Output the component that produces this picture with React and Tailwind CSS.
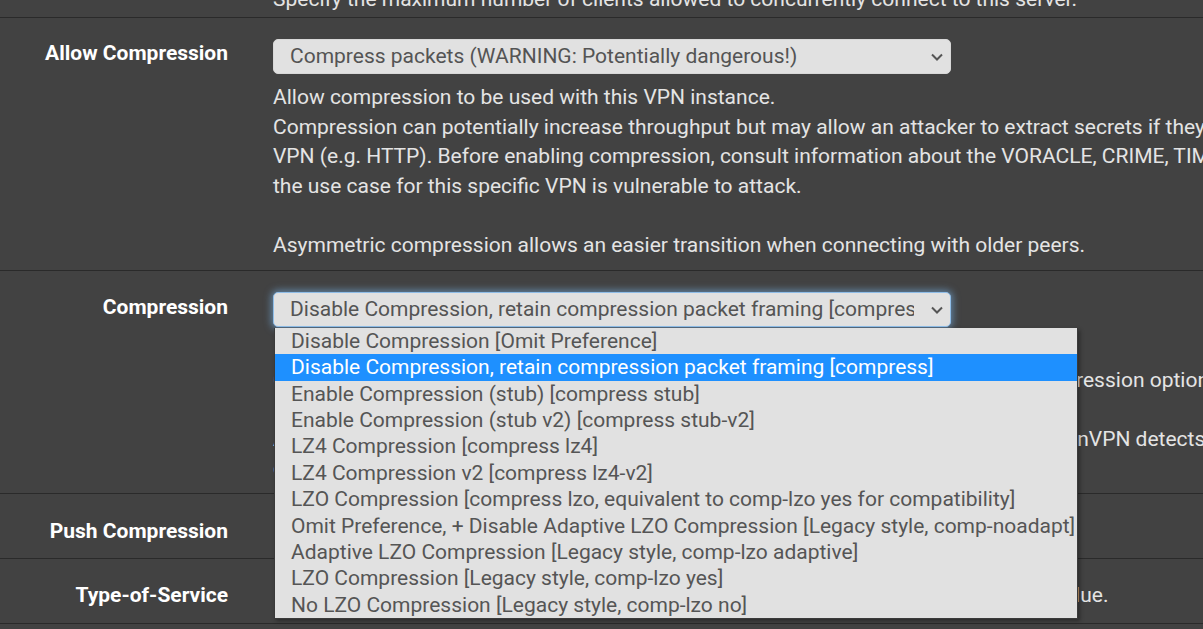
import React from "react";

const options = [
  "Disable Compression [Omit Preference]",
  "Disable Compression, retain compression packet framing [compress]",
  "Enable Compression (stub) [compress stub]",
  "Enable Compression (stub v2) [compress stub-v2]",
  "LZ4 Compression [compress lz4]",
  "LZ4 Compression v2 [compress lz4-v2]",
  "LZO Compression [compress lzo, equivalent to comp-lzo yes for compatibility]",
  "Omit Preference, + Disable Adaptive LZO Compression [Legacy style, comp-noadapt]",
  "Adaptive LZO Compression [Legacy style, comp-lzo adaptive]",
  "LZO Compression [Legacy style, comp-lzo yes]",
  "No LZO Compression [Legacy style, comp-lzo no]",
];

function Chevron() {
  return (
    <svg width="12" height="8" viewBox="0 0 12 8" className="shrink-0">
      <polyline points="1,1.5 6,6.5 11,1.5" fill="none" stroke="#555" strokeWidth="2" />
    </svg>
  );
}

function Select({ text, focused }) {
  return (
    <div
      className={
        "w-[678px] h-[35px] rounded-[5px] bg-[#e1e1e1] text-[#545454] flex items-center pl-[16px] pr-[7px] border " +
        (focused
          ? "border-[#8fbde8] shadow-[0_0_7px_2px_rgba(120,180,235,0.55)]"
          : "border-[#d8d8d8]")
      }
    >
      <div className="flex-1 overflow-hidden whitespace-nowrap mr-[17px]">{text}</div>
      <Chevron />
    </div>
  );
}

function Label({ children, pt = "pt-[21px]" }) {
  return (
    <div className={"w-[228px] shrink-0 text-right font-bold text-white " + pt}>{children}</div>
  );
}

function Line({ children }) {
  return <div className="whitespace-nowrap h-[29.5px]">{children}</div>;
}

function Checkbox() {
  return <span className="inline-block w-[19px] h-[19px] ml-[4px] rounded-[3px] bg-white border border-[#888] mr-[7px] align-[-3px]" />;
}

export default function App() {
  return (
    <div className="w-[1203px] h-[629px] overflow-hidden bg-[#424242] font-['Roboto',sans-serif] text-[21px] leading-[29.5px] text-[#e4e4e4] relative">
      <div className="h-[17px] flex items-end overflow-hidden">
        <div className="pl-[273px] whitespace-nowrap mb-[3px]">
          Specify the maximum number of clients allowed to concurrently connect to this server.
        </div>
      </div>

      {/* Allow Compression */}
      <div className="flex border-t border-[#2a2a2a]">
        <Label>Allow Compression</Label>
        <div className="ml-[45px] pt-[21px] pb-[10px] flex flex-col">
          <Select text="Compress packets (WARNING: Potentially dangerous!)" />
          <div className="mt-[9px]">
            <Line>Allow compression to be used with this VPN instance.</Line>
            <Line>
              Compression can potentially increase throughput but may allow an attacker to extract secrets if they can control compressed plaintext traversing the
            </Line>
            <Line>
              VPN (e.g. HTTP). Before enabling compression, consult information about the VORACLE, CRIME, TIME, and BREACH attacks against TLS to decide if
            </Line>
            <Line>the use case for this specific VPN is vulnerable to attack.</Line>
            <Line>{"\u00a0"}</Line>
            <Line>Asymmetric compression allows an easier transition when connecting with older peers.</Line>
          </div>
        </div>
      </div>

      {/* Compression */}
      <div className="flex border-t border-[#2a2a2a] relative">
        <Label pt="pt-[21.5px]">Compression</Label>
        <div className="ml-[45px] pt-[21px] pb-[9.5px] flex flex-col relative">
          <Select focused text="Disable Compression, retain compression packet framing [compress]" />
          <div className="mt-[9px]">
            <Line>Deprecated. Compress tunnel packets using the LZO algorithm.</Line>
            <Line>
              Compression can potentially dangerous and insecure. See the note on the Allow Compression option above.
            </Line>
            <Line>{"\u00a0"}</Line>
            <Line>
              Adaptive compression will dynamically disable compression for a period of time if OpenVPN detects that the data in the packets is not being compressed efficiently.
            </Line>
            <Line>efficiently.</Line>
          </div>
        </div>
      </div>

      {/* Push Compression */}
      <div className="flex border-t border-[#2a2a2a] h-[65px]">
        <Label pt="pt-[22.5px]">Push Compression</Label>
        <div className="ml-[45px] pt-[22.5px] whitespace-nowrap">
          <Checkbox />
          Push the selected Compression setting to connecting clients.
        </div>
      </div>

      {/* Type-of-Service */}
      <div className="flex border-t border-b border-[#2a2a2a] h-[66px]">
        <Label pt="pt-[21.5px]">Type-of-Service</Label>
        <div className="ml-[45px] pt-[21.5px] whitespace-nowrap">
          <Checkbox />
          Set the TOS IP header value of tunnel packets to match the encapsulated packet value.
        </div>
      </div>

      {/* Open dropdown list */}
      <div className="absolute left-[274px] top-[328px] w-[804px] bg-[#e1e1e1] border-l border-r border-b border-[#3a3a3a] text-[#555] leading-[26.36px] shadow-[2px_2px_4px_rgba(0,0,0,0.35)]">
        {options.map((o, i) => (
          <div
            key={i}
            className={
              "h-[26.36px] pl-[16px] whitespace-nowrap " +
              (i === 1 ? "bg-[#1e90ff] text-white" : "")
            }
          >
            {o}
          </div>
        ))}
      </div>
    </div>
  );
}
